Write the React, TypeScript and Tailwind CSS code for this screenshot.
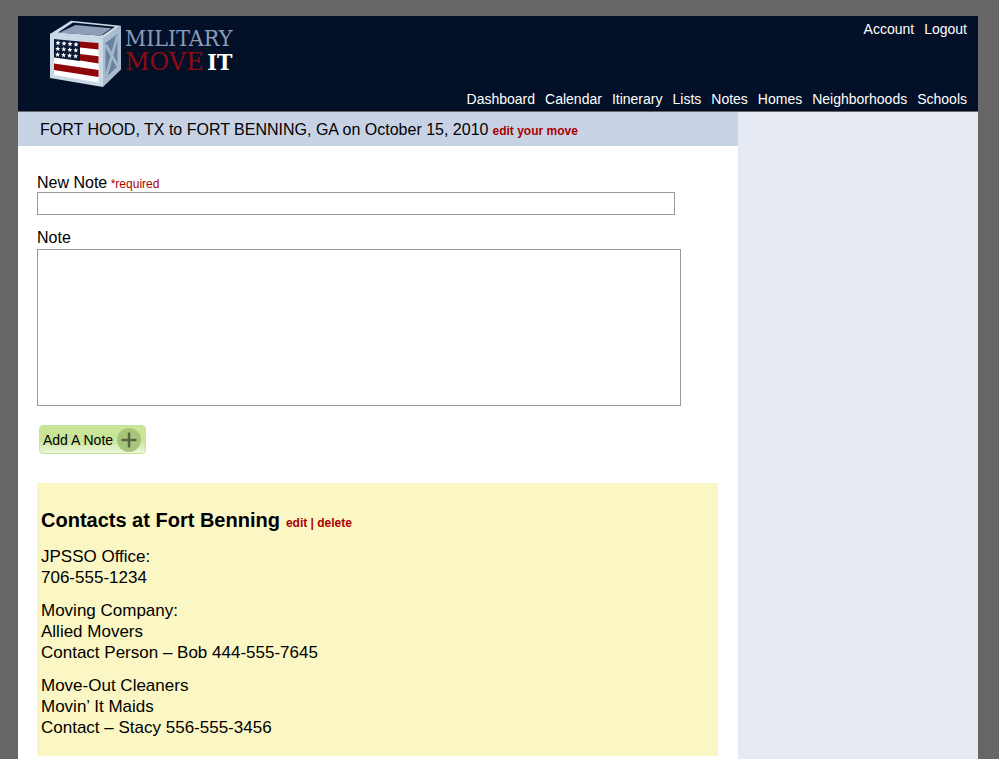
const navItems = ["Dashboard", "Calendar", "Itinerary", "Lists", "Notes", "Homes", "Neighborhoods", "Schools"];

const stars = [0, 1, 2].flatMap((row) =>
  [0, 1, 2, 3].map((col) => ({ x: 8 + col * 6 - row * 0.2, y: 23 + row * 5.8 + col * 0.5 })),
);

function CrateLogo() {
  return (
    <svg width="72" height="68" viewBox="0 0 72 68" aria-hidden="true" className="shrink-0">
      {/* top */}
      <path d="M0 14 L21 0.8 L71 5.8 L53 19 Z" fill="#c9d9e5" />
      <path d="M8 12.500 L23 2.500 L65 6.800 L53 15 L50 15.500 Z" fill="#06122b" />
      <path d="M9 12.800 L25.500 5 L61.500 8.200 L51 15.500 Z" fill="#8d9eb8" />
      {/* side */}
      <path d="M53 18 L71 5.800 L71 49.500 L53 67 Z" fill="#a9bccf" />
      <path d="M55.500 23 L67.500 14 L67.500 46.500 L55.500 58 Z" fill="#6a819f" />
      <path d="M56 25 L67.500 46 M67.500 15.500 L56 57" stroke="#a3b7cb" strokeWidth="2.800" />
      {/* front */}
      <path d="M0 13.500 L53 18.500 L53 67 L0 58 Z" fill="#c9d9e5" />
      <path d="M4 19 L48.500 23 L48.500 62.500 L4 55 Z" fill="#ffffff" />
      <path d="M30 21.400 L48.500 23 L48.500 29.500 L30 27.500 Z" fill="#8e070b" />
      <path d="M30 34 L48.500 36.300 L48.500 43.500 L30 40.500 Z" fill="#8e070b" />
      <path d="M4 43.500 L48.500 50 L48.500 57 L4 50 Z" fill="#8e070b" />
      <path d="M4 19 L30 21.400 L30 41 L4 37.500 Z" fill="#071633" />
      {stars.map(({ x, y }) => (
        <path
          key={`${x}-${y}`}
          transform={`translate(${x} ${y})`}
          d="M0 -2.700 L0.750 -0.900 L2.600 -0.800 L1.100 0.450 L1.600 2.300 L0 1.200 L-1.600 2.300 L-1.100 0.450 L-2.600 -0.800 L-0.750 -0.900 Z"
          fill="#ffffff"
        />
      ))}
    </svg>
  );
}

export default function App() {
  return (
    <div className="min-h-screen bg-[#666666] pt-4 pr-[21px] pl-[18px] font-['Liberation_Sans',Arial,sans-serif] text-base text-black">
      <div className="mx-auto flex min-h-[calc(100vh-16px)] max-w-[960px] flex-col">
        <header className="mb-px flex h-[95px] justify-between bg-[#041028] pr-[11px] pl-8">
          <a href="#home" className="flex items-start pt-1">
            <CrateLogo />
            <span className="flex flex-col pt-1.5 pl-[3px] whitespace-nowrap">
              <span className="font-['DejaVu_Serif_Condensed','DejaVu_Serif',serif] text-[23px] leading-6 text-[#8a9cb8]">MILITARY</span>
              <span className="flex justify-between">
                <span className="font-['DejaVu_Serif',serif] text-2xl leading-6 text-[#8e0b10]">MOVE</span>
                <span className="font-['DejaVu_Serif_Condensed','DejaVu_Serif',serif] text-[23px] leading-6 font-bold text-white">IT</span>
              </span>
            </span>
          </a>
          <div className="flex flex-col items-end justify-between pt-[3px] pb-0.5 text-sm text-white">
            <nav aria-label="Account" className="flex gap-2.5">
              <a href="#account">Account</a>
              <a href="#logout">Logout</a>
            </nav>
            <nav aria-label="Main" className="flex gap-2.5">
              {navItems.map((item) => (
                <a key={item} href={`#${item.toLowerCase()}`}>{item}</a>
              ))}
            </nav>
          </div>
        </header>
        <div className="grid grow grid-cols-[3fr_1fr]">
          <main className="bg-white">
            <div className="flex h-[34px] items-baseline gap-1 bg-[#c8d2e5] pt-1.5 pl-[22px]">
              <h1>FORT HOOD, TX to FORT BENNING, GA on October 15, 2010</h1>
              <a href="#edit-move" className="text-xs font-bold text-[#aa0000]">edit your move</a>
            </div>
            <div className="px-5 pb-[3px] pl-[19px]">
              <form className="flex flex-col items-start pt-7" onSubmit={(e) => e.preventDefault()}>
                <label htmlFor="title" className="leading-[18px]">
                  New Note <span className="-ml-px text-xs leading-none text-[#aa0000]">*required</span>
                </label>
                <input id="title" type="text" required className="h-[23px] w-[638px] max-w-full border border-[#999999] bg-white px-1 outline-none" />
                <label htmlFor="note" className="mt-3 leading-[22px]">Note</label>
                <textarea id="note" className="h-[157px] w-[644px] max-w-full resize-none border border-[#999999] bg-white p-1 outline-none" />
                <button type="submit" className="mt-[19px] ml-0.5 flex h-[29px] items-center gap-1 rounded border border-[#c3e29a] bg-linear-to-b from-[#c8e598] from-55% to-[#eef7df] pr-1 pl-[3px] text-sm">
                  Add A Note
                  <svg width="24" height="24" viewBox="0 0 24 24" aria-hidden="true">
                    <circle cx="12" cy="12" r="12" fill="#a9c57b" />
                    <path d="M12 4.500v15M4.500 12h15" stroke="#56663d" strokeWidth="2.500" />
                  </svg>
                </button>
              </form>
              <article className="mt-[29px] flex flex-col gap-3 bg-[#fbf7c5] px-1 pt-6 pb-[18px] text-[17px] leading-[21px]">
                <div className="flex items-baseline gap-1.5">
                  <h2 className="text-xl leading-[27px] font-bold">Contacts at Fort Benning</h2>
                  <span className="text-xs font-bold text-[#aa0000]">
                    <a href="#edit">edit</a> | <a href="#delete">delete</a>
                  </span>
                </div>
                <p>JPSSO Office:<br />706-555-1234</p>
                <p>Moving Company:<br />Allied Movers<br />Contact Person – Bob 444-555-7645</p>
                <p>Move-Out Cleaners<br />Movin’ It Maids<br />Contact – Stacy 556-555-3456</p>
              </article>
            </div>
          </main>
          <aside className="bg-[#e6eaf3]" />
        </div>
      </div>
    </div>
  );
}
